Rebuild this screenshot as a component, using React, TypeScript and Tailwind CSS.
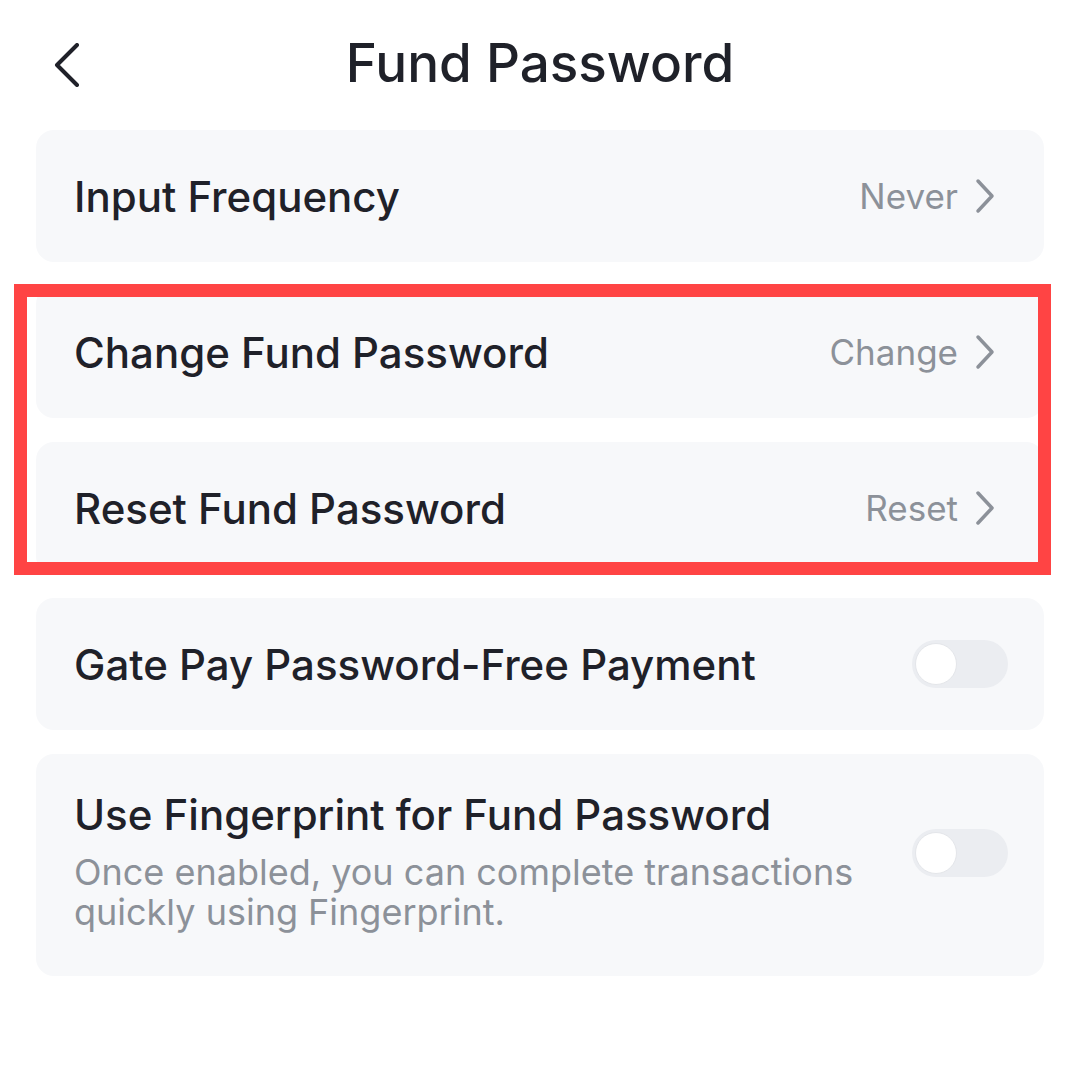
import React from "react";

const Chevron = () => (
  <svg width="22" height="36" viewBox="0 0 22 36" fill="none" className="shrink-0">
    <path d="M4 3 L18 18 L4 33" stroke="#8c9199" strokeWidth="3.5" strokeLinecap="round" strokeLinejoin="round" />
  </svg>
);

const Toggle = ({ className = "" }: { className?: string }) => (
  <div className={`w-[96px] h-[48px] rounded-full bg-[#ebedf1] p-[3px] flex items-center shrink-0 ${className}`}>
    <div className="w-[42px] h-[42px] rounded-full bg-white border border-[#e4e6ea]" />
  </div>
);

const NavRow = ({ label, value }: { label: string; value: string }) => (
  <div className="h-[132px] rounded-[18px] bg-[#f7f8fa] flex items-center justify-between pl-[38px] pr-[48px]">
    <span className="text-[42px] font-medium text-[#1f2129]">{label}</span>
    <div className="flex items-center gap-[16px]">
      <span className="text-[35px] text-[#8c9199]">{value}</span>
      <Chevron />
    </div>
  </div>
);

export default function App() {
  return (
    <div className="w-[1080px] h-[1084px] bg-white overflow-hidden" style={{ fontFamily: "Inter, 'Noto Sans', sans-serif" }}>
      <div className="h-[130px] flex items-center relative">
        <div className="absolute left-[54px] top-[43px]">
          <svg width="26" height="44" viewBox="0 0 26 44" fill="none">
            <path d="M23 2 L3 22 L23 42" stroke="#1f2129" strokeWidth="4" strokeLinecap="round" strokeLinejoin="round" />
          </svg>
        </div>
        <div className="w-full text-center text-[53px] font-medium text-[#1f2129] -mt-[2px]">Fund Password</div>
      </div>
      <div className="px-[36px] flex flex-col gap-[24px]">
        <NavRow label="Input Frequency" value="Never" />
        <div className="relative flex flex-col gap-[24px]">
          <NavRow label="Change Fund Password" value="Change" />
          <NavRow label="Reset Fund Password" value="Reset" />
          <div className="absolute -left-[22px] -right-[7px] top-[-2px] bottom-[-1px] border-[13px] border-[#ff4444]" />
        </div>
        <div className="h-[132px] rounded-[18px] bg-[#f7f8fa] flex items-center justify-between pl-[38px] pr-[36px]">
          <span className="text-[42px] font-medium text-[#1f2129]">Gate Pay Password-Free Payment</span>
          <Toggle />
        </div>
        <div className="h-[222px] rounded-[18px] bg-[#f7f8fa] flex items-start justify-between pl-[38px] pr-[36px] pt-[33px]">
          <div className="flex flex-col">
            <span className="text-[42px] font-medium text-[#1f2129] leading-[56px]">Use Fingerprint for Fund Password</span>
            <span className="text-[36px] text-[#8c9199] leading-[40px] w-[800px] mt-[9px]">Once enabled, you can complete transactions quickly using Fingerprint.</span>
          </div>
          <Toggle className="mt-[42px]" />
        </div>
      </div>
    </div>
  );
}
